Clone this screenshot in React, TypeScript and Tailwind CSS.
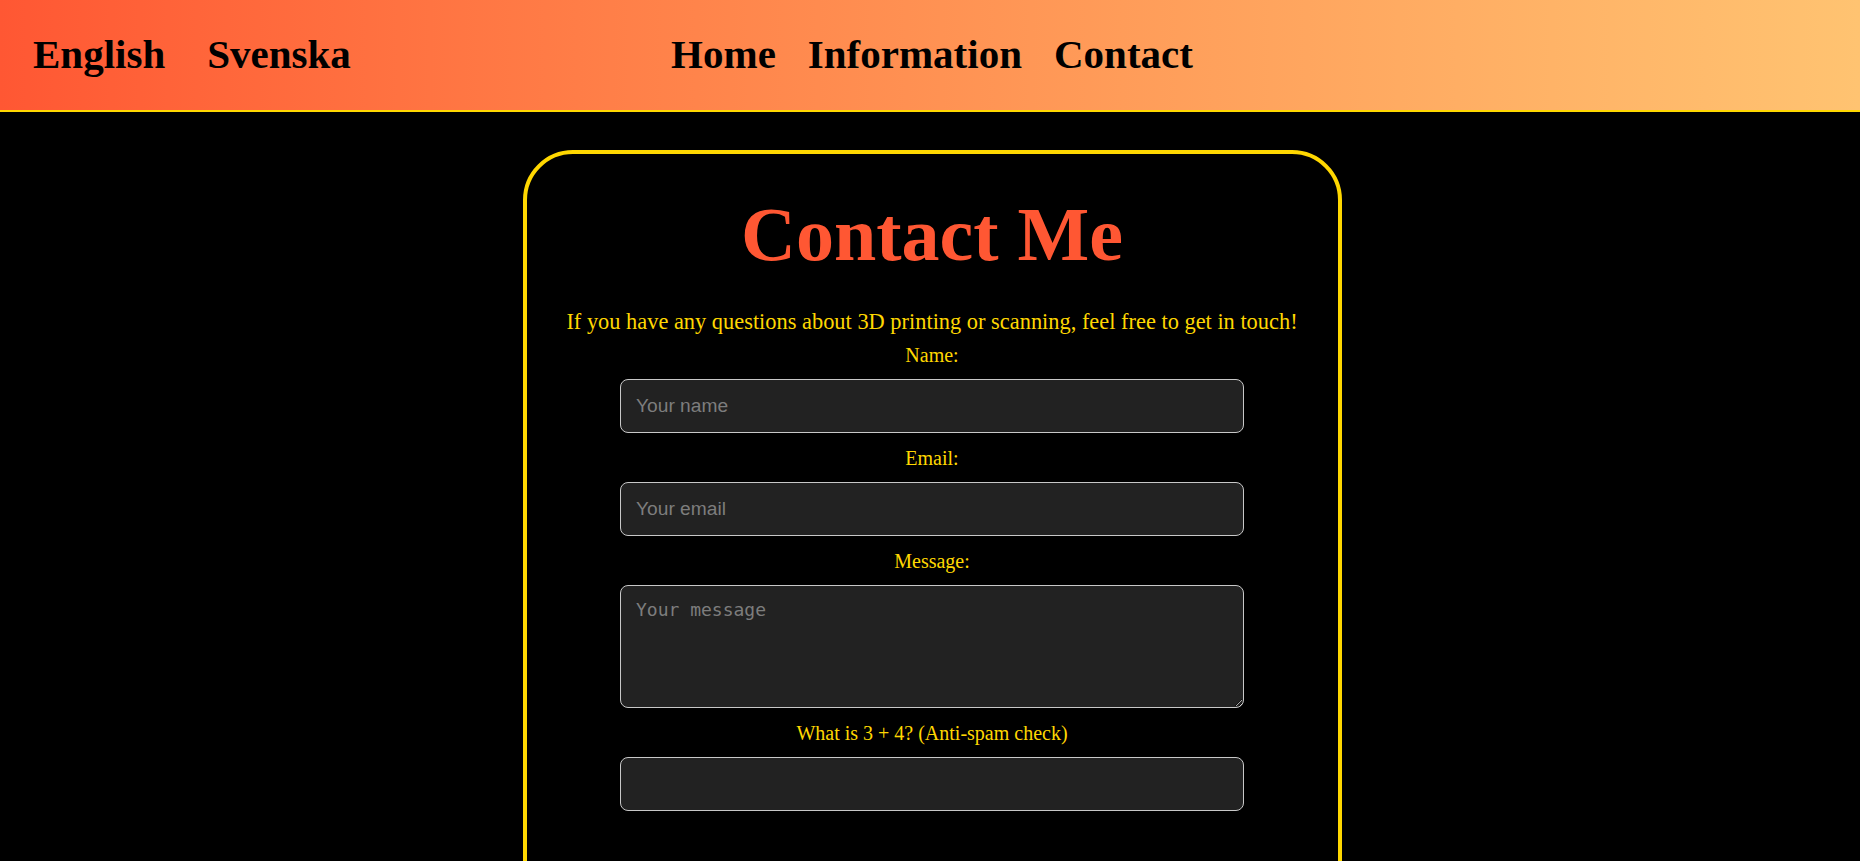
import { useState } from 'react';

const serif = "font-['Liberation_Serif','Times_New_Roman',serif]";

const LANGS = ['English', 'Svenska'];
const NAV = ['Home', 'Information', 'Contact'];

function Header() {
  return (
    <header
      className={`grid h-[112px] grid-cols-[1fr_auto_1fr] items-center border-b-2 border-[#ffd700] bg-gradient-to-r from-[#ff5733] to-[#ffc371] pl-[33px] pr-[29px] pb-[2px] ${serif}`}
    >
      {/* Language switch */}
      <div className="flex items-center gap-[42px]">
        {LANGS.map((l) => (
          <a key={l} href="#" className="text-[41px] leading-[46px] font-bold text-black">
            {l}
          </a>
        ))}
      </div>

      {/* Main nav */}
      <nav className="flex items-center gap-[32px]">
        {NAV.map((n) => (
          <a key={n} href="#" className="text-[41px] leading-[46px] font-bold text-black">
            {n}
          </a>
        ))}
      </nav>
      <div />
    </header>
  );
}

const inputCls =
  "block w-[624px] rounded-[8px] border border-[#c8c8c8] bg-[#222222] px-[15px] text-white outline-none";

export default function App() {
  const [form, setForm] = useState({ name: '', email: '', message: '', check: '' });

  return (
    <div className="min-h-screen bg-black">
      <Header />

      <main className={`flex justify-center pt-[38px] pl-[4px] ${serif}`}>
        <section className="flex w-[819px] flex-col items-center rounded-[50px] border-4 border-[#ffd700] bg-black pt-[36px] pb-[140px]">
          <h1 className="text-[76px] leading-[88px] font-bold text-[#ff5733]">Contact Me</h1>
          <p className="mt-[31px] text-[22.4px] leading-[25px] text-[#ffd700]">
            If you have any questions about 3D printing or scanning, feel free to get in touch!
          </p>

          <form className="flex flex-col items-center" onSubmit={(e) => e.preventDefault()}>
            <label htmlFor="name" className="mt-[10px] text-[20px] leading-[22px] text-[#ffd700]">
              Name:
            </label>
            <input
              id="name"
              placeholder="Your name"
              value={form.name}
              onChange={(e) => setForm({ ...form, name: e.target.value })}
              className={`${inputCls} mt-[13px] h-[54px] font-['Liberation_Sans',Arial,sans-serif] text-[19.2px] placeholder:text-[#7d7d7d]`}
            />

            <label htmlFor="email" className="mt-[14px] text-[20px] leading-[22px] text-[#ffd700]">
              Email:
            </label>
            <input
              id="email"
              type="email"
              placeholder="Your email"
              value={form.email}
              onChange={(e) => setForm({ ...form, email: e.target.value })}
              className={`${inputCls} mt-[13px] h-[54px] font-['Liberation_Sans',Arial,sans-serif] text-[19.2px] placeholder:text-[#7d7d7d]`}
            />

            <label htmlFor="message" className="mt-[14px] text-[20px] leading-[22px] text-[#ffd700]">
              Message:
            </label>
            <textarea
              id="message"
              placeholder="Your message"
              value={form.message}
              onChange={(e) => setForm({ ...form, message: e.target.value })}
              className={`${inputCls} mt-[13px] h-[123px] py-[13px] font-['DejaVu_Sans_Mono','Liberation_Mono',monospace] text-[18px] leading-[22px] placeholder:text-[#7d7d7d]`}
            />

            <label htmlFor="check" className="mt-[14px] text-[20px] leading-[22px] text-[#ffd700]">
              What is 3 + 4? (Anti-spam check)
            </label>
            <input
              id="check"
              value={form.check}
              onChange={(e) => setForm({ ...form, check: e.target.value })}
              className={`${inputCls} mt-[13px] h-[54px] font-['Liberation_Sans',Arial,sans-serif] text-[19.2px]`}
            />
          </form>
        </section>
      </main>
    </div>
  );
}
